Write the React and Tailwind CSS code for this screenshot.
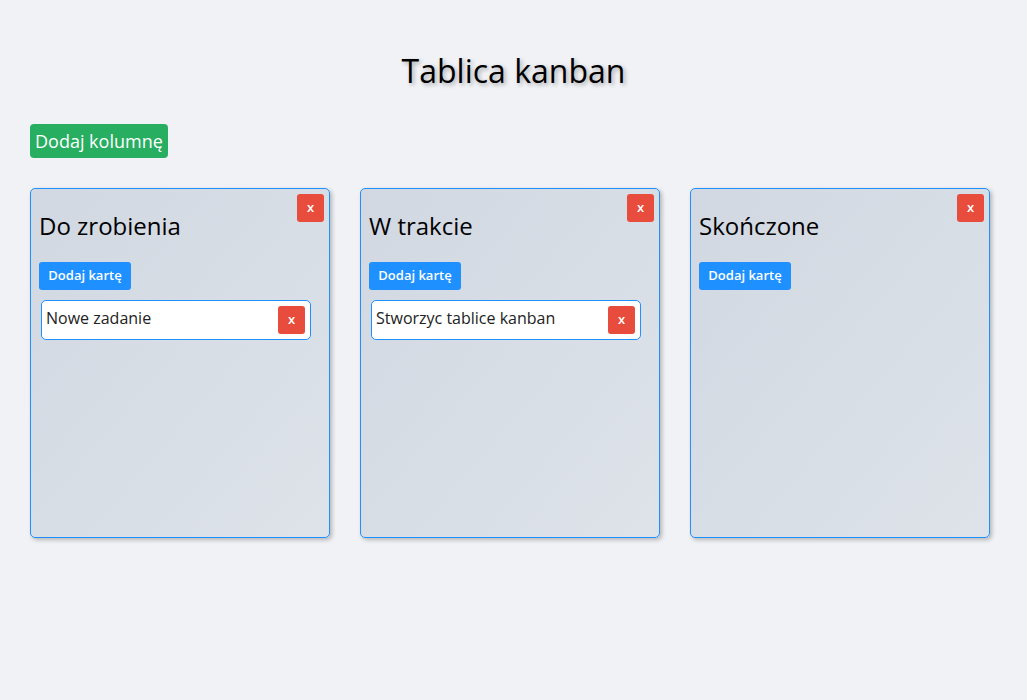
import React, { useState } from "react";

const initialColumns = [
  { id: 1, title: "Do zrobienia", cards: [{ id: 1, text: "Nowe zadanie" }] },
  { id: 2, title: "W trakcie", cards: [{ id: 2, text: "Stworzyc tablice kanban" }] },
  { id: 3, title: "Skończone", cards: [] },
];

const Card = ({ card, onDelete }) => (
  <div className="ml-[2px] w-[270px] h-[40px] flex items-center justify-between bg-white border border-[#1e90ff] rounded-[5px] pl-[4px] pr-[5px]">
    <span className="text-[16px] leading-[22px] pb-[4px] text-[#222]">{card.text}</span>
    <button
      onClick={onDelete}
      className="w-[27px] h-[28px] bg-[#e74c3c] text-white text-[13px] font-semibold rounded-[3px] flex items-center justify-center"
    >
      x
    </button>
  </div>
);

const Column = ({ column, onDelete, onAddCard, onDeleteCard }) => (
  <div className="relative w-[300px] h-[350px] border border-[#1e90ff] rounded-[5px] bg-gradient-to-br from-[#d1d8e1] to-[#dee3ea] shadow-[2px_2px_4px_rgba(0,0,0,0.25)] px-[8px] pt-[20px]">
    <button
      onClick={onDelete}
      className="absolute top-[5px] right-[5px] w-[27px] h-[28px] bg-[#e74c3c] text-white text-[13px] font-semibold rounded-[3px] flex items-center justify-center"
    >
      x
    </button>
    <h2 className="text-[24px] leading-[33px] text-black">{column.title}</h2>
    <button
      onClick={onAddCard}
      className="mt-[20px] h-[28px] w-[92px] bg-[#1e90ff] text-white text-[13px] font-semibold rounded-[3px]"
    >
      Dodaj kartę
    </button>
    <div className="mt-[10px] flex flex-col gap-[10px]">
      {column.cards.map((card) => (
        <Card key={card.id} card={card} onDelete={() => onDeleteCard(card.id)} />
      ))}
    </div>
  </div>
);

const App = () => {
  const [columns, setColumns] = useState(initialColumns);

  const addColumn = () => {
    setColumns((prev) => [...prev, { id: Date.now(), title: "Nowa kolumna", cards: [] }]);
  };

  const deleteColumn = (id) => setColumns((prev) => prev.filter((c) => c.id !== id));

  const addCard = (id) => {
    setColumns((prev) =>
      prev.map((c) => (c.id === id ? { ...c, cards: [...c.cards, { id: Date.now(), text: "Nowe zadanie" }] } : c))
    );
  };

  const deleteCard = (colId, cardId) => {
    setColumns((prev) =>
      prev.map((c) => (c.id === colId ? { ...c, cards: c.cards.filter((k) => k.id !== cardId) } : c))
    );
  };

  return (
    <div className="min-h-[700px] bg-[#f0f2f5] px-[30px] pt-[49px] font-['Open_Sans',sans-serif]">
      <h1 className="text-center text-[32px] leading-[44px] text-black [text-shadow:2px_2px_4px_rgba(0,0,0,0.3)]">
        Tablica kanban
      </h1>
      <button
        onClick={addColumn}
        className="mt-[31px] h-[34px] px-[5px] bg-[#27ae60] text-white text-[18px] leading-[24px] rounded-[4px]"
      >
        Dodaj kolumnę
      </button>
      <div className="mt-[30px] flex gap-[30px]">
        {columns.map((col) => (
          <Column
            key={col.id}
            column={col}
            onDelete={() => deleteColumn(col.id)}
            onAddCard={() => addCard(col.id)}
            onDeleteCard={(cardId) => deleteCard(col.id, cardId)}
          />
        ))}
      </div>
    </div>
  );
};

export default App;
